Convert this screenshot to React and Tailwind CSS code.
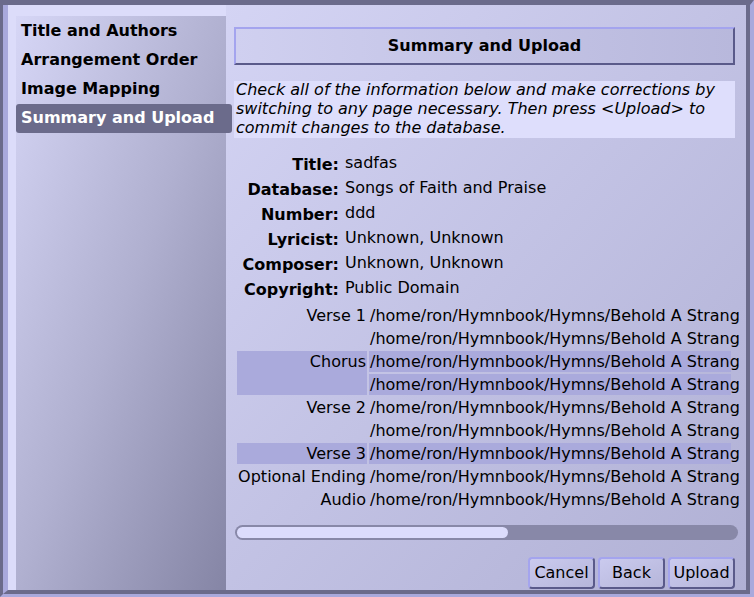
import React from 'react';

const font = { fontFamily: '"DejaVu Sans", Verdana, sans-serif' };

const pages = ['Title and Authors', 'Arrangement Order', 'Image Mapping', 'Summary and Upload'];

const details = [
  ['Title:', 'sadfas'],
  ['Database:', 'Songs of Faith and Praise'],
  ['Number:', 'ddd'],
  ['Lyricist:', 'Unknown, Unknown'],
  ['Composer:', 'Unknown, Unknown'],
  ['Copyright:', 'Public Domain'],
];

// only the visible part of the path fits before the viewport edge
const PATH = '/home/ron/Hymnbook/Hymns/Behold A Strang';

function PathCell({ hi }) {
  return (
    <div className={`h-[21px] leading-[21px] pl-[1px] whitespace-nowrap ${hi ? 'bg-[#aaaadc]' : ''}`}>
      {PATH}
    </div>
  );
}

function Label({ children, hi, span }) {
  return (
    <div
      className={`leading-[21px] pr-[1px] text-right whitespace-nowrap ${span ? 'row-span-2 h-[44px]' : 'h-[21px]'} ${hi ? 'bg-[#aaaadc]' : ''}`}
    >
      {children}
    </div>
  );
}

function Button({ children }) {
  return (
    <button className="w-[67px] h-[32px] rounded-[4px] border-2 border-t-[#a4a4ee] border-l-[#a4a4ee] border-b-[#5a5a8a] border-r-[#5a5a8a] bg-gradient-to-br from-[#cacaee] to-[#b6b6da] text-[16px] text-black leading-none">
      {children}
    </button>
  );
}

export default function App() {
  return (
    <div style={font} className="w-[754px] h-[597px] bg-[#aaaadc] text-[16px] text-black">
      <div className="w-full h-full border-t-[5px] border-l-[3px] border-r-[4px] border-b-[3px] border-t-[#6b6b8b] border-l-[#6b6b8b] border-r-[#a9a9dc] border-b-[#a9a9dc]">
        <div className="w-full h-full flex border-l-[5px] border-r-[4px] border-b-[4px] border-l-[#a9a9dc] border-r-[#6b6b8b] border-b-[#6b6b8b]">
          {/* sidebar */}
          <div className="w-[218px] shrink-0 h-full bg-[#dcdcfa] pl-[8px] pt-[11px] flex">
            <div className="flex-1 bg-gradient-to-br from-[#d6d6f6] via-[#b0b0d0] to-[#8484a4] flex flex-col pt-[1px]">
              {pages.map((p, i) => (
                <div
                  key={p}
                  className={`relative z-10 h-[29px] leading-[28px] pl-[5px] font-bold whitespace-nowrap ${
                    i === 3 ? 'w-[216px] bg-[#6b6b8b] text-white rounded-[3px]' : 'w-[210px] text-black'
                  }`}
                >
                  {p}
                </div>
              ))}
            </div>
          </div>

          {/* main panel */}
          <div className="flex-1 min-w-0 h-full flex flex-col bg-gradient-to-br from-[#d4d4f4] to-[#b0b0d4] pl-[8px] pr-[11px] pt-[22px]">
            <div className="h-[38px] flex items-center justify-center font-bold border-2 border-t-[#a4a4ee] border-l-[#a4a4ee] border-b-[#5a5a8a] border-r-[#5a5a8a] bg-gradient-to-r from-[#d0d0f0] to-[#b8b8dc]">
              Summary and Upload
            </div>

            <div className="mt-[16px] h-[57px] bg-[#dedefc] italic leading-[19px] pl-[2px]">
              <div className="-mt-px">
                Check all of the information below and make corrections by switching to any page necessary. Then press &lt;Upload&gt; to commit changes to the database.
              </div>
            </div>

            <div className="mt-[14px] grid grid-cols-[105px_1fr] gap-x-[6px]">
              {details.map(([k, v]) => (
                <React.Fragment key={k}>
                  <div className="h-[25px] leading-[25px] font-bold text-right">{k}</div>
                  <div className="h-[25px] leading-[22px]">{v}</div>
                </React.Fragment>
              ))}
            </div>

            <div className="mt-[3px] ml-[1px] w-[504px] shrink-0 overflow-hidden">
              <div className="grid grid-cols-[130px_362px] gap-[2px] pl-[2px]">
                <Label>Verse 1</Label>
                <PathCell />
                <div />
                <PathCell />
                <Label hi span>
                  <div className="h-[21px]">Chorus</div>
                </Label>
                <PathCell hi />
                <PathCell hi />
                <Label>Verse 2</Label>
                <PathCell />
                <div />
                <PathCell />
                <Label hi>Verse 3</Label>
                <PathCell hi />
                <Label>Optional Ending</Label>
                <PathCell />
                <Label>Audio</Label>
                <PathCell />
              </div>
            </div>

            <div className="mt-[15px] ml-[1px] w-[503px] shrink-0 h-[15px] rounded-full bg-[#8888a8] p-[2px]">
              <div className="w-[271px] h-full rounded-full bg-[#dcdcfc]" />
            </div>

            <div className="mt-[17px] flex justify-end gap-[3px]">
              <Button>Cancel</Button>
              <Button>Back</Button>
              <Button>Upload</Button>
            </div>
          </div>
        </div>
      </div>
    </div>
  );
}
